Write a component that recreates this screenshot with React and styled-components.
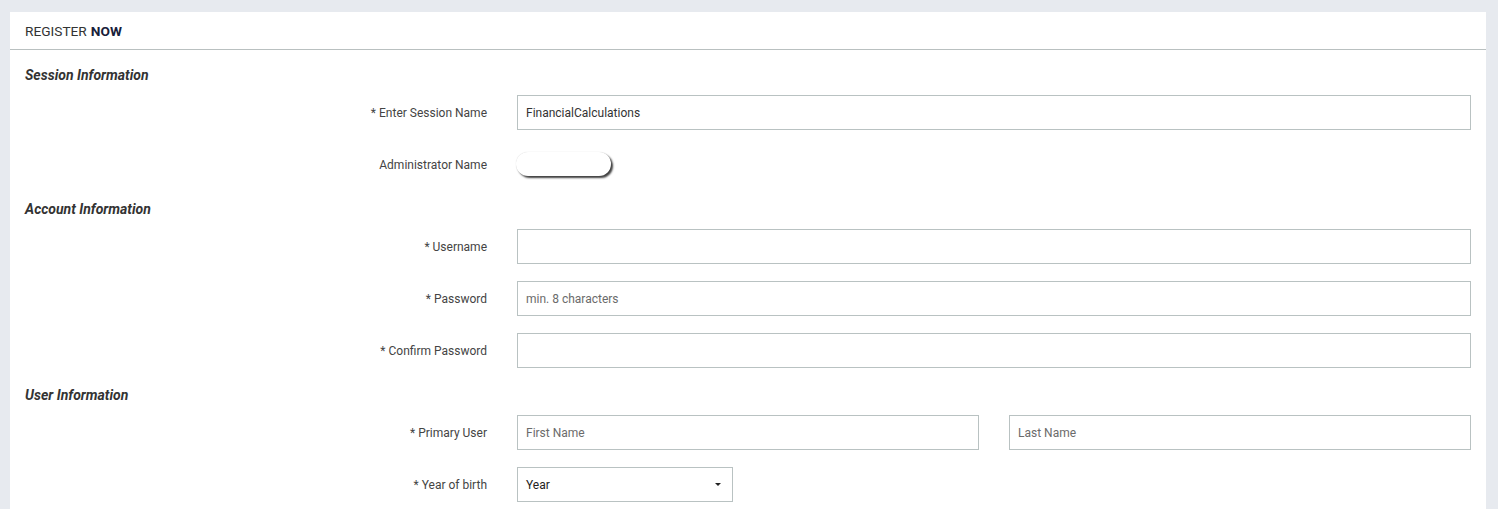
import React from "react";
import styled, { createGlobalStyle } from "styled-components";

const GlobalStyle = createGlobalStyle`
  html, body {
    margin: 0;
    padding: 0;
    background: #e7eaef;
    font-family: Roboto, "Liberation Sans", Arial, sans-serif;
  }
  body {
    padding: 12px 12px 0 10px;
  }
`;

const Card = styled.div`
  background: #ffffff;
  min-height: 497px;
`;

const Header = styled.div`
  height: 37px;
  border-bottom: 1px solid #b9c0c0;
  display: flex;
  align-items: center;
  padding: 0 15px;
  font-size: 13.7px;
  color: #333;
  b {
    color: #17203a;
    font-weight: 700;
    margin-left: 4px;
  }
`;

const Body = styled.div`
  padding: 15px 15px 20px 15px;
  display: flex;
  flex-direction: column;
  gap: 17px;
`;

const SectionTitle = styled.div`
  font-size: 14px;
  font-weight: 700;
  font-style: italic;
  color: #333;
  line-height: 20px;
  margin-bottom: -7px;
`;

const Row = styled.div`
  display: grid;
  grid-template-columns: 462px 1fr;
  column-gap: 30px;
  align-items: center;
  min-height: 35px;
`;

const Label = styled.label`
  text-align: right;
  font-size: 12px;
  color: #444;
`;

const Fields = styled.div`
  display: grid;
  grid-template-columns: ${(p) => p.$cols || "1fr"};
  column-gap: 30px;
`;

const Input = styled.input`
  box-sizing: border-box;
  height: 35px;
  width: 100%;
  border: 1px solid #b9c2c2;
  padding: 0 8px;
  font-family: inherit;
  font-size: 12px;
  color: #333;
  outline: none;
  &::placeholder {
    color: #6b6b6b;
  }
`;

const SelectBox = styled.div`
  box-sizing: border-box;
  width: 216px;
  height: 35px;
  border: 1px solid #b9c2c2;
  padding: 0 10px 0 8px;
  display: flex;
  align-items: center;
  justify-content: space-between;
  font-size: 12px;
  color: #222;
`;

const Caret = styled.span`
  width: 0;
  height: 0;
  border-left: 3px solid transparent;
  border-right: 3px solid transparent;
  border-top: 3px solid #222;
  margin-right: 1px;
`;

const Toggle = styled.div`
  width: 95px;
  height: 24px;
  border-radius: 12px;
  background: #fff;
  margin-left: -1px;
  margin-top: -2px;
  box-shadow: 2px 2px 2px rgba(0, 0, 0, 0.75), 0 0 1px rgba(0, 0, 0, 0.2);
`;

export default function App() {
  return (
    <>
      <GlobalStyle />
      <Card>
        <Header>
          REGISTER <b>NOW</b>
        </Header>
        <Body>
          <SectionTitle>Session Information</SectionTitle>
          <Row>
            <Label>* Enter Session Name</Label>
            <Fields>
              <Input defaultValue="FinancialCalculations" />
            </Fields>
          </Row>
          <Row>
            <Label>Administrator Name</Label>
            <Toggle />
          </Row>
          <SectionTitle>Account Information</SectionTitle>
          <Row>
            <Label>* Username</Label>
            <Fields>
              <Input />
            </Fields>
          </Row>
          <Row>
            <Label>* Password</Label>
            <Fields>
              <Input placeholder="min. 8 characters" />
            </Fields>
          </Row>
          <Row>
            <Label>* Confirm Password</Label>
            <Fields>
              <Input />
            </Fields>
          </Row>
          <SectionTitle>User Information</SectionTitle>
          <Row>
            <Label>* Primary User</Label>
            <Fields $cols="1fr 1fr">
              <Input placeholder="First Name" />
              <Input placeholder="Last Name" />
            </Fields>
          </Row>
          <Row>
            <Label>* Year of birth</Label>
            <SelectBox>
              Year
              <Caret />
            </SelectBox>
          </Row>
        </Body>
      </Card>
    </>
  );
}
